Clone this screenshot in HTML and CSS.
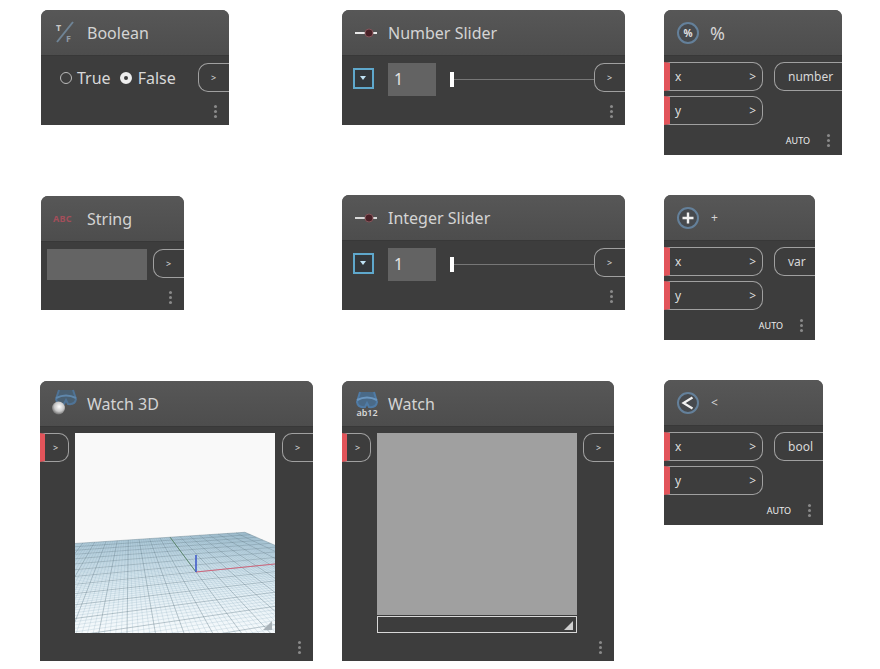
FILE: index.html
```html
<!DOCTYPE html>
<html lang="en">
<head>
    <meta charset="UTF-8">
    <title>Nodes</title>
    <link rel="stylesheet" href="styles.css">
</head>
<body>
    <div class="canvas">

        <div class="node node-boolean">
            <div class="node-head">
                <svg class="icon" width="24" height="24" viewBox="0 0 24 24">
                    <line x1="20" y1="1" x2="4" y2="21" stroke="#6f8496" stroke-width="2"/>
                    <text x="3" y="10" class="icon-text" fill="#c8c8c8">T</text>
                    <text x="13" y="21" class="icon-text" fill="#8f9aa3">F</text>
                </svg>
                <span class="title">Boolean</span>
            </div>
            <div class="node-body">
                <div class="radios">
                    <span class="radio"></span><span class="radio-label">True</span>
                    <span class="radio radio-on"></span><span class="radio-label">False</span>
                </div>
                <div class="port port-out"><span>&gt;</span></div>
            </div>
            <div class="node-foot"><span class="dots"></span></div>
        </div>

        <div class="node node-number">
            <div class="node-head">
                <svg class="icon" width="24" height="24" viewBox="0 0 24 24">
                    <line x1="1" y1="12" x2="23" y2="12" stroke="#e8e8e8" stroke-width="2"/>
                    <circle cx="15" cy="12" r="4" fill="#4a2228" stroke="#84555a"/>
                </svg>
                <span class="title">Number Slider</span>
            </div>
            <div class="node-body">
                <span class="toggle"></span>
                <span class="num-input">1</span>
                <div class="track"><span class="thumb"></span></div>
                <div class="port port-out"><span>&gt;</span></div>
            </div>
            <div class="node-foot"><span class="dots"></span></div>
        </div>

        <div class="node node-mod">
            <div class="node-head">
                <svg class="icon" width="24" height="24" viewBox="0 0 24 24">
                    <circle cx="12" cy="12" r="10" fill="#474a4e" stroke="#64809a" stroke-width="2"/>
                    <text x="12" y="16" class="icon-op" fill="#e0e0e0">%</text>
                </svg>
                <span class="title title-op">%</span>
            </div>
            <div class="node-body node-body-ops">
                <div class="inputs">
                    <div class="port port-in"><span>x</span><span>&gt;</span></div>
                    <div class="port port-in"><span>y</span><span>&gt;</span></div>
                </div>
                <div class="port port-out port-text"><span>number</span></div>
            </div>
            <div class="node-foot node-foot-ops"><span class="auto">AUTO</span><span class="dots"></span></div>
        </div>

        <div class="node node-string">
            <div class="node-head">
                <svg class="icon" width="24" height="24" viewBox="0 0 24 24">
                    <text x="0" y="15" class="icon-abc" fill="#a34e5a">ABC</text>
                </svg>
                <span class="title">String</span>
            </div>
            <div class="node-body">
                <span class="str-input"></span>
                <div class="port port-out"><span>&gt;</span></div>
            </div>
            <div class="node-foot"><span class="dots"></span></div>
        </div>

        <div class="node node-integer">
            <div class="node-head">
                <svg class="icon" width="24" height="24" viewBox="0 0 24 24">
                    <line x1="1" y1="12" x2="23" y2="12" stroke="#d8d8d8" stroke-width="2"/>
                    <circle cx="15" cy="12" r="4" fill="#4a2228" stroke="#84555a"/>
                </svg>
                <span class="title">Integer Slider</span>
            </div>
            <div class="node-body">
                <span class="toggle"></span>
                <span class="num-input">1</span>
                <div class="track"><span class="thumb"></span></div>
                <div class="port port-out"><span>&gt;</span></div>
            </div>
            <div class="node-foot"><span class="dots"></span></div>
        </div>

        <div class="node node-add">
            <div class="node-head">
                <svg class="icon" width="24" height="24" viewBox="0 0 24 24">
                    <circle cx="12" cy="12" r="10" fill="#474a4e" stroke="#64809a" stroke-width="2"/>
                    <path d="M12 6.5v11M6.5 12h11" stroke="#f2f2f2" stroke-width="2.4"/>
                </svg>
                <span class="title title-small">+</span>
            </div>
            <div class="node-body node-body-ops">
                <div class="inputs">
                    <div class="port port-in"><span>x</span><span>&gt;</span></div>
                    <div class="port port-in"><span>y</span><span>&gt;</span></div>
                </div>
                <div class="port port-out port-text"><span>var</span></div>
            </div>
            <div class="node-foot node-foot-ops"><span class="auto">AUTO</span><span class="dots"></span></div>
        </div>

        <div class="node node-watch3d">
            <div class="node-head">
                <svg class="icon" width="26" height="32" viewBox="0 0 26 32">
                    <defs>
                        <radialGradient id="ball" cx="0.55" cy="0.4" r="0.6">
                            <stop offset="0" stop-color="#ffffff"/>
                            <stop offset="0.6" stop-color="#c8c8c8"/>
                            <stop offset="1" stop-color="#6e6e6e"/>
                        </radialGradient>
                    </defs>
                    <path d="M7 2L4 11q1 6 8 5l2-4 2 4q7 1 8-5L21 2" fill="#4a6072" stroke="#4f7396" stroke-width="2"/>
                    <path d="M4 10q10-5 20 0" fill="none" stroke="#5f87ab" stroke-width="2"/>
                    <circle cx="6.5" cy="20" r="6.5" fill="url(#ball)"/>
                </svg>
                <span class="title">Watch 3D</span>
            </div>
            <div class="node-body node-body-watch">
                <div class="port port-in port-short"><span>&gt;</span></div>
                <div class="preview">
                    <svg id="grid3d" width="200" height="200" viewBox="0 0 200 200"></svg>
                    <span class="grip grip-dim"></span>
                </div>
                <div class="port port-out"><span>&gt;</span></div>
            </div>
            <div class="node-foot node-foot-watch"><span class="dots"></span></div>
        </div>

        <div class="node node-watch">
            <div class="node-head">
                <svg class="icon" width="26" height="32" viewBox="0 0 26 32">
                    <path d="M6 4L3 14q1 6 8 5l2-4 2 4q7 1 8-5L20 4" fill="#4a6a88" stroke="#4f7ba6" stroke-width="2"/>
                    <path d="M3 12q10-5 20 0" fill="none" stroke="#6a96c0" stroke-width="2"/>
                    <text x="13" y="28" class="icon-ab" fill="#d8d8d8">ab12</text>
                </svg>
                <span class="title">Watch</span>
            </div>
            <div class="node-body node-body-watch">
                <div class="port port-in port-short"><span>&gt;</span></div>
                <div class="watch-col">
                    <div class="watch-pane"></div>
                    <div class="watch-bar"><span class="grip"></span></div>
                </div>
                <div class="port port-out"><span>&gt;</span></div>
            </div>
            <div class="node-foot node-foot-watch"><span class="dots"></span></div>
        </div>

        <div class="node node-less">
            <div class="node-head">
                <svg class="icon" width="24" height="24" viewBox="0 0 24 24">
                    <circle cx="12" cy="12" r="10" fill="#474a4e" stroke="#64809a" stroke-width="2"/>
                    <path d="M16.5 6.5L7.5 12l9 5.5" fill="none" stroke="#f2f2f2" stroke-width="2.2"/>
                </svg>
                <span class="title title-small">&lt;</span>
            </div>
            <div class="node-body node-body-ops">
                <div class="inputs">
                    <div class="port port-in"><span>x</span><span>&gt;</span></div>
                    <div class="port port-in"><span>y</span><span>&gt;</span></div>
                </div>
                <div class="port port-out port-text"><span>bool</span></div>
            </div>
            <div class="node-foot node-foot-ops"><span class="auto">AUTO</span><span class="dots"></span></div>
        </div>

    </div>
    <script src="grid.js"></script>
</body>
</html>
```

FILE: styles.css
```css
body {
    margin: 0;
    background: #fff;
    font-family: "Noto Sans", "Open Sans", sans-serif;
    overflow: hidden;
}

.canvas {
    position: relative;
    width: 880px;
    height: 669px;
}

/* node places on the canvas */
.node {
    position: absolute;
    display: flex;
    flex-direction: column;
    background: #3d3d3d;
    border-radius: 7px 7px 0 0;
    overflow: hidden;
}

.node-boolean { left: 41px; top: 10px; width: 188px; height: 115px; }
.node-number { left: 342px; top: 10px; width: 283px; height: 115px; }
.node-mod { left: 664px; top: 10px; width: 178px; height: 145px; }
.node-string { left: 41px; top: 196px; width: 143px; height: 114px; }
.node-integer { left: 342px; top: 195px; width: 283px; height: 115px; }
.node-add { left: 664px; top: 195px; width: 151px; height: 145px; }
.node-watch3d { left: 40px; top: 381px; width: 273px; height: 280px; }
.node-watch { left: 342px; top: 381px; width: 272px; height: 280px; }
.node-less { left: 664px; top: 380px; width: 159px; height: 145px; }

.node-head {
    display: flex;
    align-items: center;
    flex: none;
    height: 46px;
    padding-left: 12px;
    background: linear-gradient(#575757, #4d4d4d);
    border-bottom: 1px solid #383838;
    box-sizing: border-box;
}

.icon {
    flex: none;
    width: 24px;
    margin-right: 10px;
}

.node-watch3d .icon, .node-watch .icon {
    width: 26px;
    margin-right: 8px;
}

.node-watch3d .title {
    margin-left: 1px;
}

.title {
    color: #d4d4d4;
    font-size: 16px;
}

.title-small {
    font-size: 12px;
    margin-left: 1px;
}

.title-op {
    font-size: 18px;
}

.icon-text { font-size: 9px; font-weight: 700; font-family: "Noto Sans", sans-serif; }
.icon-op { font-size: 10px; font-weight: 700; text-anchor: middle; font-family: "Noto Sans", sans-serif; }
.icon-abc { font-size: 9px; font-weight: 700; letter-spacing: 0.3px; font-family: "Noto Sans", sans-serif; }
.icon-ab { font-size: 9px; font-weight: 600; text-anchor: middle; font-family: "Noto Sans", sans-serif; }

.node-body {
    display: flex;
    align-items: flex-start;
    justify-content: space-between;
    flex: none;
    height: 36px;
    padding: 7px 0 0 0;
    box-sizing: border-box;
}

.node-body-ops {
    height: 69px;
    padding-top: 6px;
}

.node-body-watch {
    justify-content: flex-start;
    height: 206px;
    padding-top: 6px;
}

.node-body-watch .port-out {
    margin-left: auto;
}

.node-foot {
    display: flex;
    align-items: center;
    justify-content: flex-end;
    flex: 1;
    padding: 6px 12px 0 0;
    box-sizing: border-box;
}

.node-foot-ops {
    padding-top: 0;
}

.node-foot-watch {
    padding-top: 0;
}

.dots {
    width: 3px;
    height: 3px;
    border-radius: 50%;
    background: #8a8a8a;
    box-shadow: 0 -5px 0 #8a8a8a, 0 5px 0 #8a8a8a;
}

.auto {
    color: #eee;
    font-size: 9px;
    margin-right: 17px;
}

/* ports */
.port {
    display: flex;
    align-items: center;
    flex: none;
    height: 29px;
    box-sizing: border-box;
    color: #ddd;
    font-size: 9px;
}

.port-out {
    width: 31px;
    padding-left: 12px;
    border: 1px solid #a0a0a0;
    border-right: 0;
    border-radius: 10px 0 0 10px;
}

.port-text {
    width: auto;
    padding: 0 8px 0 13px;
    font-size: 12px;
    color: #d8d8d8;
}

.node-mod .port-text { width: 68px; }
.node-add .port-text { width: 41px; }
.node-less .port-text { width: 49px; }

.port-in {
    justify-content: space-between;
    width: 99px;
    padding: 0 6px 0 5px;
    border: 1px solid #a0a0a0;
    border-left: 6px solid #e2545a;
    border-radius: 0 10px 10px 0;
    font-size: 12px;
}

.port-short {
    width: 29px;
    padding: 0 0 0 8px;
    border-left-width: 5px;
    font-size: 9px;
}

.inputs {
    display: flex;
    flex-direction: column;
    gap: 5px;
}

/* boolean */
.radios {
    display: flex;
    align-items: center;
    height: 29px;
    padding-left: 19px;
    color: #d8d8d8;
    font-size: 16px;
}

.radio {
    width: 12px;
    height: 12px;
    box-sizing: border-box;
    border: 1px solid #bbb;
    border-radius: 50%;
    margin-right: 5px;
}

.radio-on {
    border: 4px solid #eee;
    margin-right: 6px;
}

.radio-label {
    margin-right: 9px;
}

/* sliders */
.toggle {
    position: relative;
    flex: none;
    width: 21px;
    height: 21px;
    margin: 5px 14px 0 11px;
    box-sizing: border-box;
    border: 2px solid #5fa8cc;
    background: #33383c;
}

.toggle::after {
    content: "";
    position: absolute;
    left: 5px;
    top: 6px;
    border-left: 3.5px solid transparent;
    border-right: 3.5px solid transparent;
    border-top: 4px solid #bfe3f5;
}

.num-input {
    flex: none;
    width: 48px;
    height: 33px;
    padding-left: 6px;
    box-sizing: border-box;
    background: #636363;
    color: #e4e4e4;
    font-size: 16px;
    line-height: 33px;
}

.track {
    position: relative;
    flex: 1;
    height: 1px;
    margin: 16px 0 0 14px;
    background: #777;
}

.thumb {
    position: absolute;
    left: 0;
    top: -7px;
    width: 4px;
    height: 15px;
    background: #fff;
}

.str-input {
    flex: none;
    width: 100px;
    height: 31px;
    margin-left: 6px;
    background: #646464;
}

/* watch panes */
.preview {
    position: relative;
    flex: none;
    width: 200px;
    height: 200px;
    margin-left: 6px;
    background: #f9f9f9;
}

.preview svg {
    display: block;
}

.watch-col {
    flex: none;
    width: 200px;
    margin-left: 6px;
}

.watch-pane {
    height: 182px;
    background: #a0a0a0;
}

.watch-bar {
    position: relative;
    height: 17px;
    margin-top: 1px;
    box-sizing: border-box;
    border: 1px solid #d8d8d8;
}

.grip {
    position: absolute;
    right: 3px;
    bottom: 2px;
    border-left: 9px solid transparent;
    border-bottom: 9px solid #cfcfcf;
}

.grip-dim {
    right: 3px;
    bottom: 3px;
    border-bottom-color: #a9b2b8;
}
```

FILE: grid.js
```js
// ground plane of the 3D preview, drawn from its two vanishing points
var svg = document.getElementById('grid3d');
var NS = 'http://www.w3.org/2000/svg';
var OX = 75, OY = 433;

// u and v run from -1 to 1 along the red and the green axis
function project(u, v) {
    var r = u * 0.125, s = v * 0.63;
    var d = r + s + 1;
    return [
        (r * 1220 + s * 129 + 196) / d - OX,
        (r * 468 + s * 482 + 572) / d - OY
    ];
}

function addLine(a, b, color, width) {
    var line = document.createElementNS(NS, 'line');
    line.setAttribute('x1', a[0]);
    line.setAttribute('y1', a[1]);
    line.setAttribute('x2', b[0]);
    line.setAttribute('y2', b[1]);
    line.setAttribute('stroke', color);
    line.setAttribute('stroke-width', width);
    svg.appendChild(line);
}

// plane fill
var defs = document.createElementNS(NS, 'defs');
defs.innerHTML = '<linearGradient id="ground" gradientUnits="userSpaceOnUse" x1="0" y1="100" x2="0" y2="200">' +
    '<stop offset="0" stop-color="#bcd6e4"/>' +
    '<stop offset="0.5" stop-color="#deecf3"/>' +
    '<stop offset="1" stop-color="#f6fafc"/></linearGradient>';
svg.appendChild(defs);

var corners = [project(-1.2, 1), project(1, 1), project(1, -1), project(-1.2, -1)];
var plane = document.createElementNS(NS, 'polygon');
plane.setAttribute('points', corners.map(function (p) { return p.join(','); }).join(' '));
plane.setAttribute('fill', 'url(#ground)');
svg.appendChild(plane);

var COUNT = 40;
for (var i = -COUNT; i <= COUNT; i++) {
    var t = i / COUNT;
    var major = i % 5 === 0;
    var color = major ? 'rgba(90,115,130,0.55)' : 'rgba(125,160,180,0.4)';
    var width = major ? 0.7 : 0.5;
    addLine(project(t, -1), project(t, 1), color, width);
    addLine(project(-1.2, t), project(1, t), color, width);
}

// axes
addLine(project(0, 0), project(0, 1), '#5f8a72', 1);
addLine(project(0, 0), project(1, 0), '#d0667c', 1);
addLine([121, 139], [121, 122], '#3a55c8', 1.5);
```
